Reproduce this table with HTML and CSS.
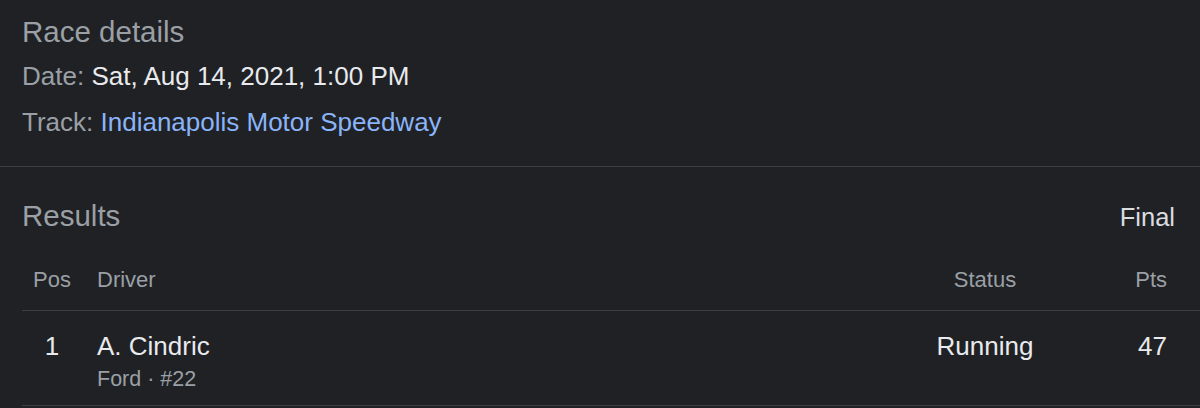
FILE: index.html
```html
<!DOCTYPE html>
<html lang="en">
<head>
<meta charset="utf-8">
<title>Race details</title>
<link rel="stylesheet" href="styles.css">
</head>
<body>
<section class="details">
  <h2 class="title">Race details</h2>
  <div class="line"><span class="label">Date:</span> <span class="value">Sat, Aug 14, 2021, 1:00 PM</span></div>
  <div class="line"><span class="label">Track:</span> <a class="link" href="#">Indianapolis Motor Speedway</a></div>
</section>
<section class="results">
  <div class="results-head">
    <h2 class="title">Results</h2>
    <span class="state">Final</span>
  </div>
  <div class="table">
    <div class="row head">
      <div class="c-pos">Pos</div>
      <div class="c-driver">Driver</div>
      <div class="c-status">Status</div>
      <div class="c-pts">Pts</div>
    </div>
    <div class="row body">
      <div class="c-pos">1</div>
      <div class="c-driver">
        <div class="name">A. Cindric</div>
        <div class="sub">Ford · #22</div>
      </div>
      <div class="c-status">Running</div>
      <div class="c-pts">47</div>
    </div>
  </div>
</section>
</body>
</html>
```
FILE: styles.css
```css
html, body {
  margin: 0;
  padding: 0;
  background: #202124;
}
body {
  font-family: "Liberation Sans", Arial, sans-serif;
  color: #e8eaed;
  width: 1200px;
  height: 408px;
  overflow: hidden;
}
.title {
  margin: 0;
  font-weight: normal;
  font-size: 29.5px;
  line-height: 42px;
  color: #9aa0a6;
}
.details {
  padding: 11px 25px 21px 22px;
  border-bottom: 1px solid #3c4043;
}
.line {
  font-size: 26px;
  line-height: 46px;
  color: #e8eaed;
}
.label {
  color: #9aa0a6;
}
.link {
  color: #8ab4f8;
  text-decoration: none;
}
.results {
  padding: 28px 0 0 22px;
}
.results-head {
  display: flex;
  justify-content: space-between;
  align-items: baseline;
  padding-right: 25px;
}
.state {
  font-size: 25.5px;
  color: #dadce0;
}
.table {
  margin-top: 27px;
}
.row {
  display: grid;
  grid-template-columns: 60px 1fr 204px 88px;
  padding-right: 25px;
  border-bottom: 1px solid #3c4043;
}
.c-pos { text-align: center; }
.c-driver { padding-left: 15px; }
.c-status { text-align: center; }
.c-pts { text-align: right; padding-right: 8px; }
.head {
  font-size: 22px;
  line-height: 32px;
  color: #9aa0a6;
  padding-bottom: 14px;
}
.body {
  font-size: 26px;
  line-height: 32px;
  color: #e8eaed;
  padding-top: 19px;
  padding-bottom: 9px;
}
.sub {
  font-size: 21.5px;
  line-height: 34px;
  color: #9aa0a6;
}
```
